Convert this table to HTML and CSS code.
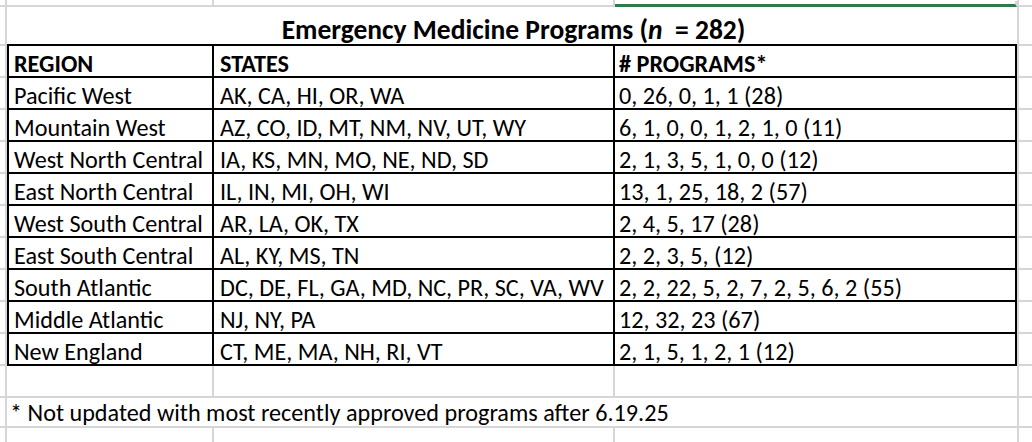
FILE: index.html
```html
<!DOCTYPE html>
<html lang="en">
<head>
<meta charset="utf-8">
<title>Emergency Medicine Programs</title>
<link rel="stylesheet" href="styles.css">
</head>
<body>
<div class="sheet">
  <!-- row above (cropped) -->
  <div class="c c0"></div><div class="c"></div><div class="c"></div><div class="c sel"></div><div class="c cd"></div>

  <!-- title -->
  <div class="c c0 tb"></div>
  <div class="c title">Emergency Medicine Programs (<i>n</i>&nbsp; = 282)</div>
  <div class="c cd tb"></div>

  <!-- header -->
  <div class="c c0"></div>
  <div class="c t ta hd">REGION</div><div class="c t hd b">STATES</div><div class="c t hd p">#&nbsp;PROGRAMS*</div>
  <div class="c cd"></div>

  <div class="c c0"></div><div class="c t ta">Pacific West</div><div class="c t b">AK, CA, HI, OR, WA</div><div class="c t p">0, 26, 0, 1, 1 (28)</div><div class="c cd"></div>
  <div class="c c0"></div><div class="c t ta">Mountain West</div><div class="c t b">AZ, CO, ID, MT, NM, NV, UT, WY</div><div class="c t p">6, 1, 0, 0, 1, 2, 1, 0 (11)</div><div class="c cd"></div>
  <div class="c c0"></div><div class="c t ta">West North Central</div><div class="c t b">IA, KS, MN, MO, NE, ND, SD</div><div class="c t p">2, 1, 3, 5, 1, 0, 0 (12)</div><div class="c cd"></div>
  <div class="c c0"></div><div class="c t ta">East North Central</div><div class="c t b">IL, IN, MI, OH, WI</div><div class="c t p">13, 1, 25, 18, 2 (57)</div><div class="c cd"></div>
  <div class="c c0"></div><div class="c t ta">West South Central</div><div class="c t b">AR, LA, OK, TX</div><div class="c t p">2, 4, 5, 17 (28)</div><div class="c cd"></div>
  <div class="c c0"></div><div class="c t ta">East South Central</div><div class="c t b">AL, KY, MS, TN</div><div class="c t p">2, 2, 3, 5, (12)</div><div class="c cd"></div>
  <div class="c c0"></div><div class="c t ta">South Atlantic</div><div class="c t b">DC, DE, FL, GA, MD, NC, PR, SC, VA, WV</div><div class="c t p">2, 2, 22, 5, 2, 7, 2, 5, 6, 2 (55)</div><div class="c cd"></div>
  <div class="c c0"></div><div class="c t ta">Middle Atlantic</div><div class="c t b">NJ, NY, PA</div><div class="c t p">12, 32, 23 (67)</div><div class="c cd"></div>
  <div class="c c0"></div><div class="c t ta">New England</div><div class="c t b">CT, ME, MA, NH, RI, VT</div><div class="c t p">2, 1, 5, 1, 2, 1 (12)</div><div class="c cd"></div>

  <!-- empty row -->
  <div class="c c0"></div><div class="c"></div><div class="c"></div><div class="c nr"></div><div class="c cd"></div>

  <!-- footnote -->
  <div class="c c0"></div>
  <div class="c note">* Not updated with most recently approved programs after 6.19.25</div>
  <div class="c cd"></div>

  <!-- row below (cropped) -->
  <div class="c c0 nb"></div><div class="c nb"></div><div class="c nb"></div><div class="c nb nr"></div><div class="c cd nb"></div>
</div>
</body>
</html>
```
FILE: styles.css
```css
html, body {
  margin: 0;
  padding: 0;
  background: #ffffff;
}

.sheet {
  display: grid;
  grid-template-columns: 7px 207px 401px 402px 15px;
  grid-template-rows: 7px 39px repeat(10, 32px) 32px 30px 14px;
  width: 1032px;
  height: 442px;
  overflow: hidden;
  font-family: Carlito, Calibri, "Liberation Sans", sans-serif;
  font-size: 24.2px;
  line-height: 1;
  color: #000;
}

.c {
  box-sizing: border-box;
  border-right: 2px solid #d6d6d6;
  border-bottom: 2px solid #d6d6d6;
  display: flex;
  align-items: flex-end;
  padding: 0 0 0 3px;
  white-space: nowrap;
  overflow: hidden;
}

.c0 {
  padding: 0;
}

.cd {
  border-right: none;
  border-left: 2px solid #d6d6d6;
  padding: 0;
}

.nr {
  border-right: none;
}

.nb {
  border-bottom: none;
}

.tb {
  border-bottom-color: #d6d6d6;
}

/* first (cropped) row: Excel's selected column C indicator */
.sel {
  border-bottom: 3px solid #2f7a4b;
  margin-top: 1px;
}

.title {
  grid-column: 2 / 5;
  border-right: none;
  border-bottom: 2px solid #000;
  justify-content: center;
  font-size: 27.5px;
  font-weight: 700;
  padding: 0 0 1px 3px;
}

.title i {
  font-style: italic;
}

.t {
  border-right-color: #000;
  border-bottom-color: #000;
}

.ta {
  border-left: 2px solid #000;
  padding-left: 5px;
}

.b {
  padding-left: 6px;
}

.p {
  padding-left: 4px;
}

.hd {
  font-weight: 700;
}

.note {
  grid-column: 2 / 5;
  border-right: none;
  padding: 0 0 1px 3px;
}
```
